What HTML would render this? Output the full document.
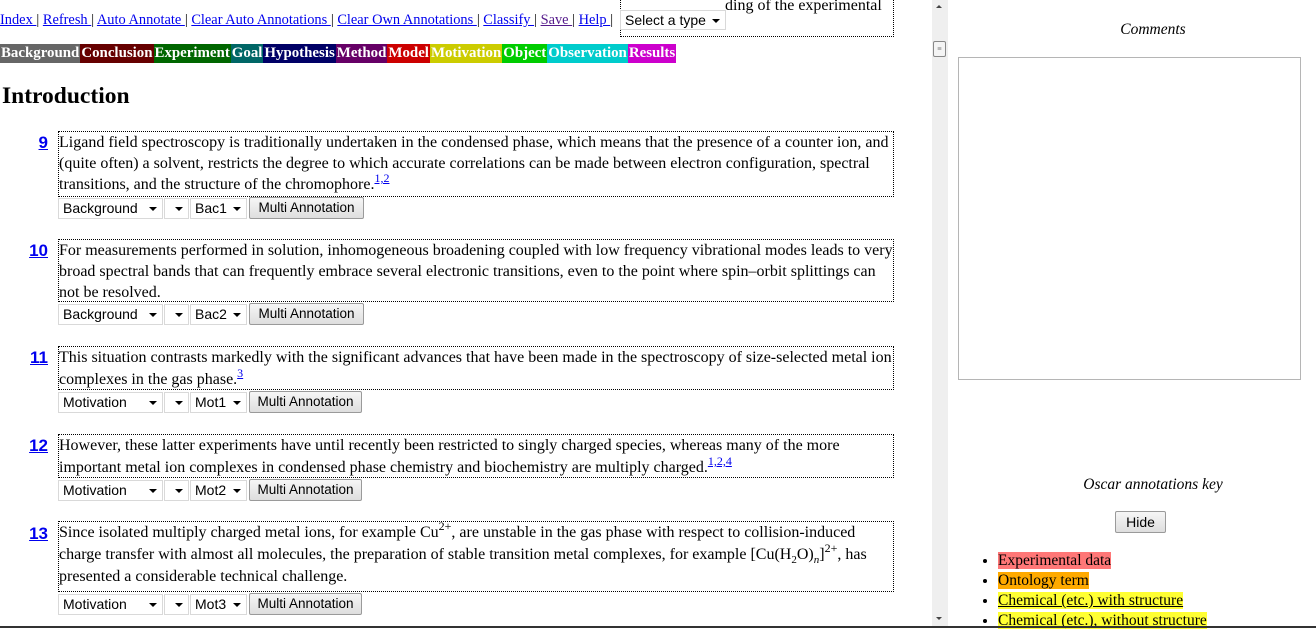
<!DOCTYPE html>
<html><head><meta charset="utf-8"><style>
*{margin:0;padding:0;box-sizing:border-box}
body{width:1316px;height:628px;overflow:hidden;background:#fff;font-family:"Liberation Serif",serif;font-size:16px;color:#000;position:relative}
.a{position:absolute}
a{color:#00e}
.nav{left:0;top:12px;white-space:nowrap;font-size:14.4px}
.sel{position:absolute;height:21px;border:1px solid #d9d9d9;background:#fff;font-family:"Liberation Sans",sans-serif;font-size:14px;padding:1px 0 0 4px;white-space:nowrap;overflow:hidden}
.sel:after{content:"";position:absolute;right:5px;top:8px;border-left:4px solid transparent;border-right:4px solid transparent;border-top:4px solid #000}
.btn{position:absolute;height:22px;border:1px solid #9a9a9a;border-radius:2px;background:linear-gradient(#f6f6f6,#dedede);font-family:"Liberation Sans",sans-serif;font-size:13.5px;text-align:center;padding-top:2px}
.tags{left:0;top:44px;height:19px;display:flex;font-weight:bold;font-size:14.9px;color:#fff;line-height:19px}
.tags div{padding:0 1px}
.num{position:absolute;left:0;width:48px;text-align:right;font-family:"Liberation Sans",sans-serif;font-weight:bold;font-size:17px;color:#00e;text-decoration:underline}
.box{position:absolute;left:58px;width:836px;border:1px dotted #000;line-height:21px;font-size:16px;letter-spacing:0;white-space:nowrap;overflow:hidden}
sup{font-size:12px;line-height:0;vertical-align:7px}
sup a{color:#00e}
</style></head><body>
<div class="a" style="left:620px;top:-3px;width:274px;height:40px;border:1px dotted #000;border-top:none;padding-left:104px;line-height:18px;font-size:16px">ding of the experimental</div>
<div class="a nav"><a href="#">Index </a>| <a href="#">Refresh </a>| <a href="#">Auto Annotate </a>| <a href="#">Clear Auto Annotations </a>| <a href="#">Clear Own Annotations </a>| <a href="#">Classify </a>| <a href="#" style="color:#551a8b">Save </a>| <a href="#">Help </a>|</div>
<div class="sel" style="left:620px;top:10px;width:106px;height:20px">Select a type</div>
<div class="a tags"><div style="background:#666">Background</div><div style="background:#660000">Conclusion</div><div style="background:#006600">Experiment</div><div style="background:#006666">Goal</div><div style="background:#000066">Hypothesis</div><div style="background:#660066">Method</div><div style="background:#cc0000">Model</div><div style="background:#cccc00">Motivation</div><div style="background:#00cc00">Object</div><div style="background:#00cccc">Observation</div><div style="background:#cc00cc">Results</div></div>
<div class="a" style="left:2px;top:83px;font-size:23.5px;font-weight:bold">Introduction</div>

<div class="num" style="top:133px">9</div>
<div class="box" style="top:131px;height:66px">Ligand field spectroscopy is traditionally undertaken in the condensed phase, which means that the presence of a counter ion, and<br>(quite often) a solvent, restricts the degree to which accurate correlations can be made between electron configuration, spectral<br>transitions, and the structure of the chromophore.<sup><a href="#">1,2</a></sup></div>
<div class="sel" style="left:58px;top:198px;width:105px">Background</div><div class="sel" style="left:164px;top:198px;width:25px"></div><div class="sel" style="left:190px;top:198px;width:57px">Bac1</div><div class="btn" style="left:249px;top:197px;width:115px">Multi Annotation</div>

<div class="num" style="top:241px">10</div>
<div class="box" style="top:239px;height:63px">For measurements performed in solution, inhomogeneous broadening coupled with low frequency vibrational modes leads to very<br>broad spectral bands that can frequently embrace several electronic transitions, even to the point where spin–orbit splittings can<br>not be resolved.</div>
<div class="sel" style="left:58px;top:304px;width:105px">Background</div><div class="sel" style="left:164px;top:304px;width:25px"></div><div class="sel" style="left:190px;top:304px;width:57px">Bac2</div><div class="btn" style="left:249px;top:303px;width:115px">Multi Annotation</div>

<div class="num" style="top:348px">11</div>
<div class="box" style="top:346px;height:44px;line-height:22px">This situation contrasts markedly with the significant advances that have been made in the spectroscopy of size-selected metal ion<br>complexes in the gas phase.<sup><a href="#">3</a></sup></div>
<div class="sel" style="left:58px;top:392px;width:105px">Motivation</div><div class="sel" style="left:164px;top:392px;width:25px"></div><div class="sel" style="left:190px;top:392px;width:57px">Mot1</div><div class="btn" style="left:249px;top:391px;width:113px">Multi Annotation</div>

<div class="num" style="top:436px">12</div>
<div class="box" style="top:434px;height:44px;line-height:22px">However, these latter experiments have until recently been restricted to singly charged species, whereas many of the more<br>important metal ion complexes in condensed phase chemistry and biochemistry are multiply charged.<sup><a href="#">1,2,4</a></sup></div>
<div class="sel" style="left:58px;top:480px;width:105px">Motivation</div><div class="sel" style="left:164px;top:480px;width:25px"></div><div class="sel" style="left:190px;top:480px;width:57px">Mot2</div><div class="btn" style="left:249px;top:479px;width:113px">Multi Annotation</div>

<div class="num" style="top:524px">13</div>
<div class="box" style="top:521px;height:71px;line-height:22px">Since isolated multiply charged metal ions, for example Cu<sup>2+</sup>, are unstable in the gas phase with respect to collision-induced<br>charge transfer with almost all molecules, the preparation of stable transition metal complexes, for example [Cu(H<sub style="font-size:11px;line-height:0">2</sub>O)<sub style="font-size:11px;line-height:0"><i>n</i></sub>]<sup>2+</sup>, has<br>presented a considerable technical challenge.</div>
<div class="sel" style="left:58px;top:594px;width:105px">Motivation</div><div class="sel" style="left:164px;top:594px;width:25px"></div><div class="sel" style="left:190px;top:594px;width:57px">Mot3</div><div class="btn" style="left:249px;top:593px;width:113px">Multi Annotation</div>

<div class="a" style="left:932px;top:0;width:16px;height:628px;background:#efefef"></div>
<div class="a" style="left:936px;top:5px;border-left:3px solid transparent;border-right:3px solid transparent;border-bottom:3px solid #444"></div>
<div class="a" style="left:936px;top:617px;border-left:3px solid transparent;border-right:3px solid transparent;border-top:3px solid #444"></div>
<div class="a" style="left:933px;top:41px;width:13px;height:16px;border:1px solid #888;background:#f4f4f4;border-radius:2px;font-size:8px;text-align:center;line-height:13px;color:#555">≡</div>

<div class="a" style="left:948px;top:21px;width:410px;text-align:center;font-style:italic;font-size:15.5px">Comments</div>
<div class="a" style="left:958px;top:57px;width:343px;height:323px;border:1px solid #b5b5b5"></div>
<div class="a" style="left:948px;top:476px;width:410px;text-align:center;font-style:italic;font-size:15.5px">Oscar annotations key</div>
<div class="btn" style="left:1115px;top:511px;width:51px;height:22px;font-size:14px">Hide</div>
<ul class="a" style="left:998px;top:551px;font-size:15.5px;line-height:20px;list-style:disc">
<li><span style="background:#f77">Experimental data</span></li>
<li><span style="background:#fa0">Ontology term</span></li>
<li><span style="background:#ff3;text-decoration:underline">Chemical (etc.) with structure</span></li>
<li><span style="background:#ff3">Chemical (etc.), without structure</span></li>
</ul>
<div class="a" style="left:0;top:626px;width:1316px;height:2px;background:#333"></div>
</body></html>
